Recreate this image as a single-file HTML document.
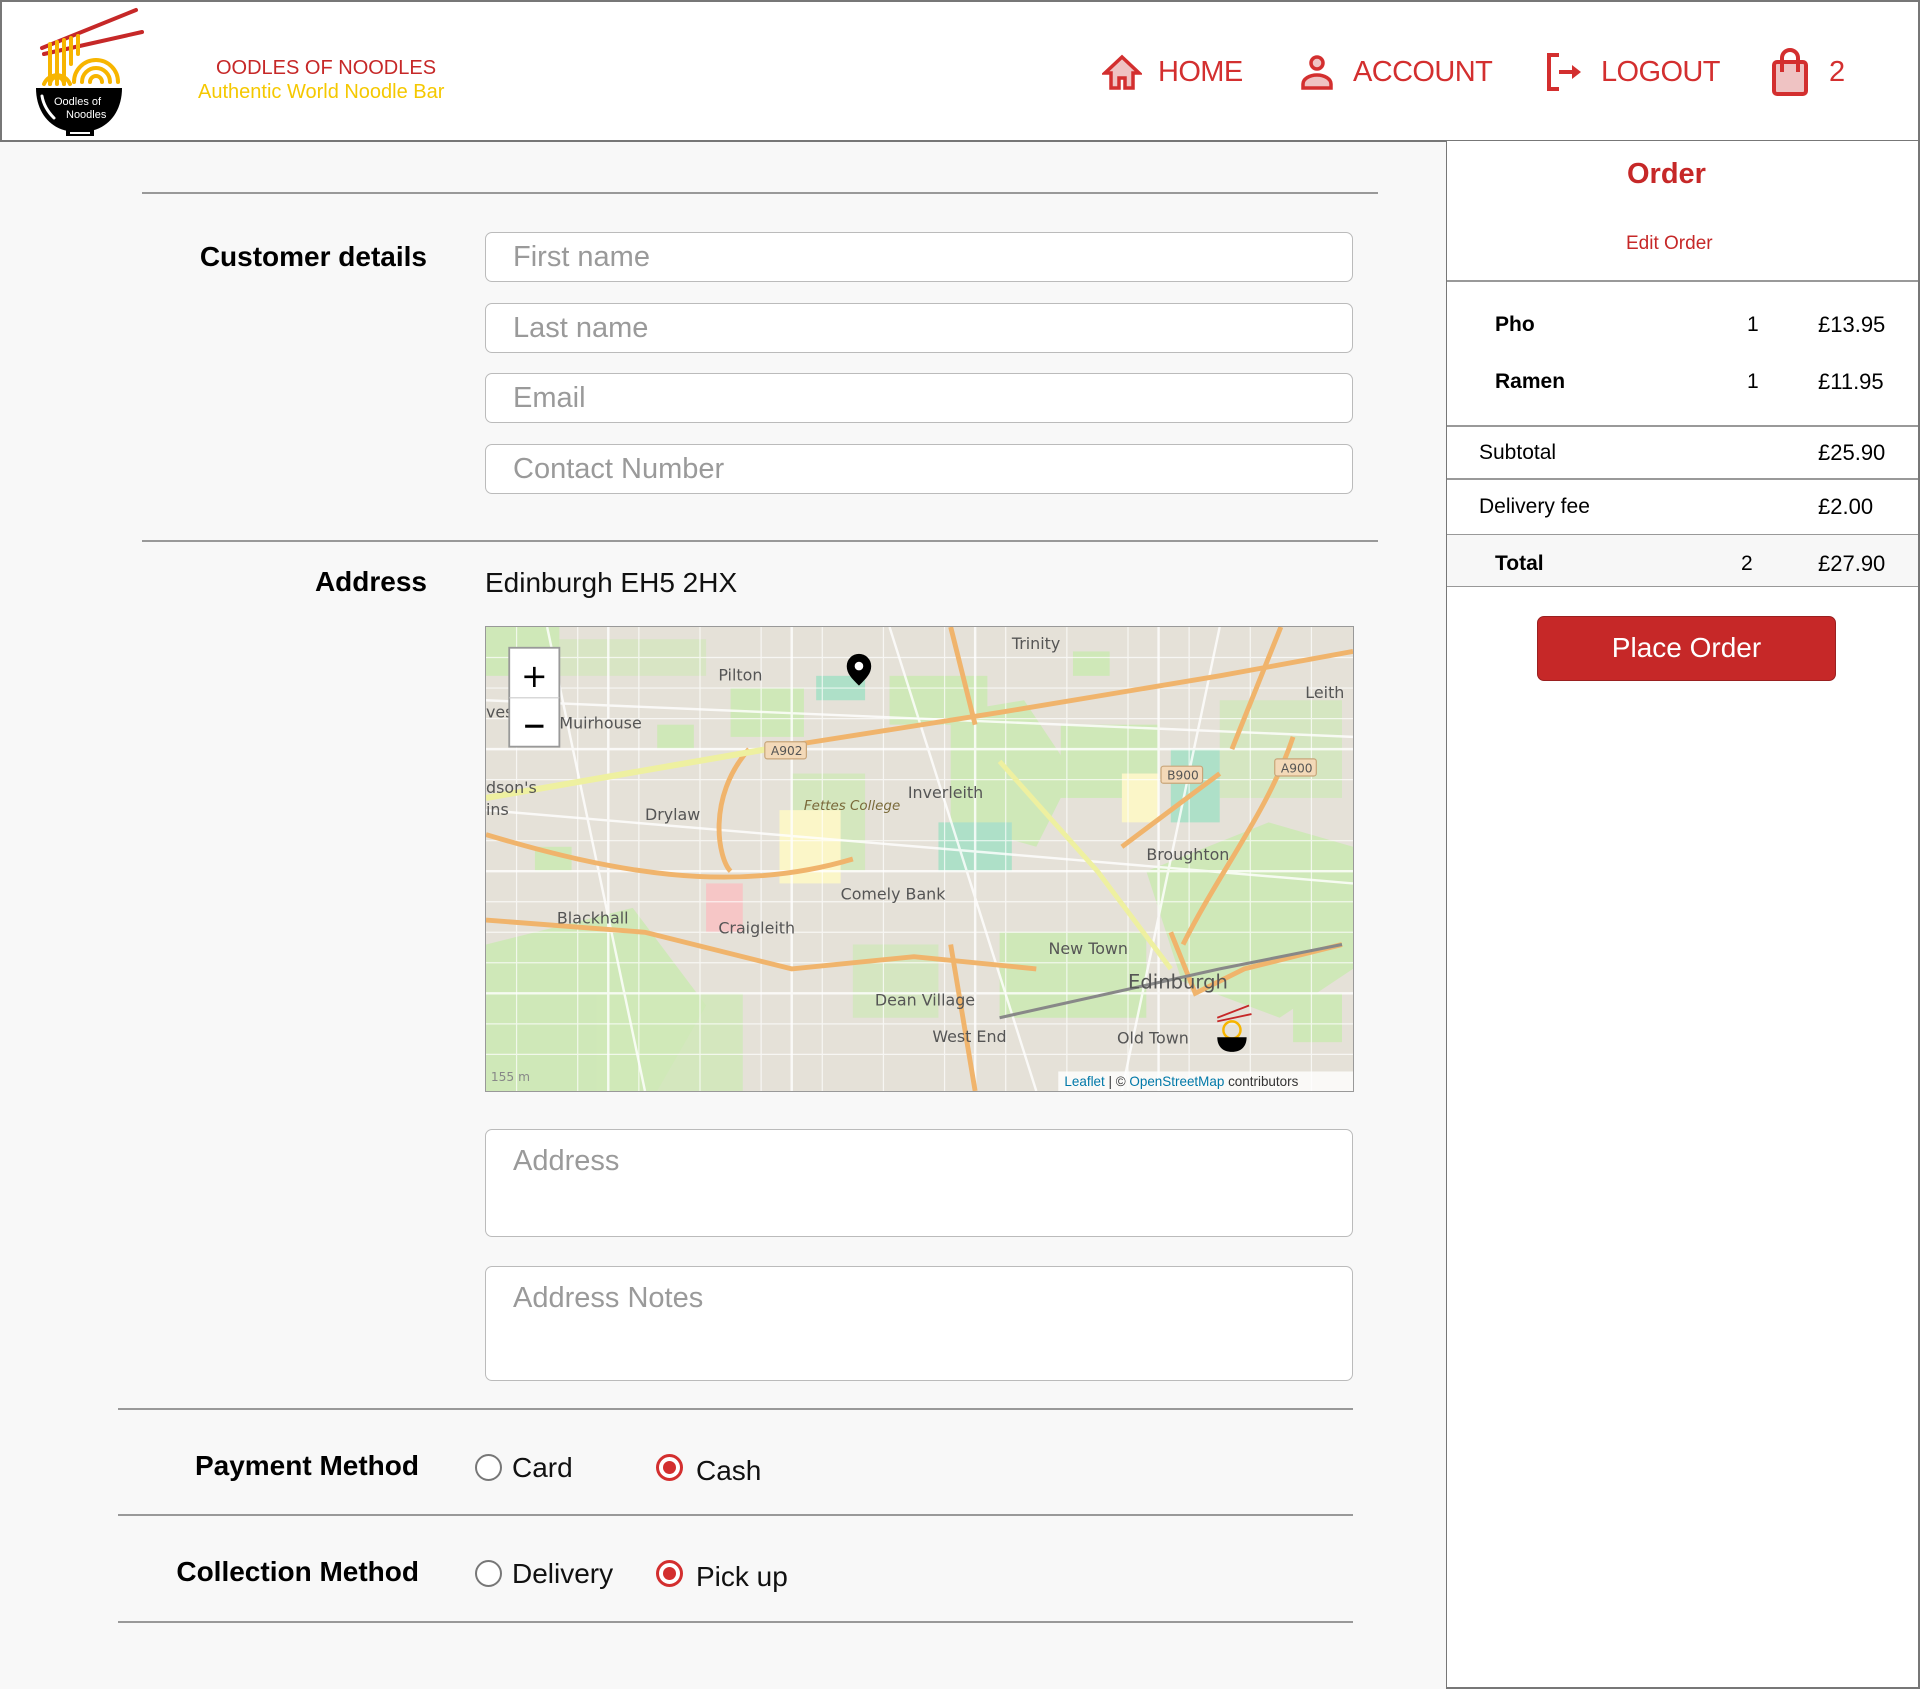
<!DOCTYPE html>
<html><head><meta charset="utf-8"><style>
*{box-sizing:border-box;margin:0;padding:0}
body{width:1920px;height:1689px;position:relative;background:#f8f8f8;font-family:"Liberation Sans",Arial,sans-serif;overflow:hidden}
.a{position:absolute;white-space:nowrap;line-height:1}
.hdr{position:absolute;left:0;top:0;width:1920px;height:142px;background:#fff;border:2px solid #777;border-bottom:2px solid #777}
.side{position:absolute;left:1446px;top:141px;width:474px;height:1548px;background:#fff;border-left:1.5px solid #777;border-right:2px solid #777;border-bottom:2px solid #777}
.hr{position:absolute;height:1.5px;background:#999}
.inp{position:absolute;left:485px;width:868px;background:#fff;border:1.5px solid #bbb;border-radius:7px}
.ph{position:absolute;left:27px;font-size:29px;color:#9a9a9a;line-height:1}
.lab{position:absolute;font-size:28px;font-weight:bold;color:#000;line-height:1;text-align:right}
.nav{color:#d32f2f;font-size:29px;letter-spacing:-0.6px}
.r{position:absolute;width:27px;height:27px;border-radius:50%;border:2px solid #777;background:#fff}
.r.on{border:3px solid #d32f2f}
.r.on:after{content:"";position:absolute;left:4px;top:4px;width:13px;height:13px;border-radius:50%;background:#d32f2f}
.opt{font-size:28px;color:#111}
.s{font-size:21px;color:#000}
.b{font-weight:bold}
</style></head><body>
<div class="hdr"></div>
<svg class="a" style="left:30px;top:4px" width="118" height="134" viewBox="0 0 118 134">
<line x1="12" y1="44" x2="106" y2="6" stroke="#c62828" stroke-width="4" stroke-linecap="round"/>
<line x1="14" y1="50" x2="112" y2="28" stroke="#c62828" stroke-width="4" stroke-linecap="round"/>
<g stroke="#f7b500" stroke-width="4" fill="none" stroke-linecap="round">
<path d="M20 40V80M27 38V80M34 36V80M41 34V60M48 32V50"/>
<path d="M44 78a22 22 0 0 1 44 0M52 78a14 14 0 0 1 28 0M60 78a6 6 0 0 1 12 0"/>
<path d="M14 80a14 14 0 0 1 26 0M20 80a7 7 0 0 1 14 0"/>
</g>
<path d="M6 84H92C92 108 78 124 60 127H38C20 124 6 108 6 84Z" fill="#000"/>
<rect x="36" y="126" width="28" height="6" fill="#000"/><rect x="40" y="128" width="20" height="2" fill="#fff"/>
<text x="24" y="101" font-size="11" fill="#fff" font-family="Liberation Sans Narrow,sans-serif">Oodles of</text>
<text x="36" y="114" font-size="11" fill="#fff" font-family="Liberation Sans Narrow,sans-serif">Noodles</text>
<path d="M12 92q2 12 12 22" stroke="#fff" stroke-width="3" fill="none" stroke-linecap="round"/>
</svg>
<div class="a" style="left:216px;top:58px;font-size:20px;color:#c62828">OODLES OF NOODLES</div>
<div class="a" style="left:198px;top:82px;font-size:20px;color:#f5c800">Authentic World Noodle Bar</div>
<svg class="a" style="left:1102px;top:54px" width="40" height="36" viewBox="0 0 40 36"><path d="M20 3L3 19h6v15h8V24h6v10h8V19h6Z" fill="#efc3c3" stroke="#d32f2f" stroke-width="3.5" stroke-linejoin="miter"/></svg>
<div class="a nav" style="left:1158px;top:58px">HOME</div>
<svg class="a" style="left:1299px;top:54px" width="36" height="36" viewBox="0 0 36 36"><circle cx="18" cy="9" r="6" fill="#efc3c3" stroke="#d32f2f" stroke-width="3.5"/><path d="M4 34v-4a14 9 0 0 1 28 0v4Z" fill="#efc3c3" stroke="#d32f2f" stroke-width="3.5"/></svg>
<div class="a nav" style="left:1353px;top:58px">ACCOUNT</div>
<svg class="a" style="left:1545px;top:52px" width="42" height="40" viewBox="0 0 42 40"><path d="M14 3H4v34h10" fill="none" stroke="#d32f2f" stroke-width="4"/><path d="M14 20h15" stroke="#d32f2f" stroke-width="4"/><path d="M27 13l9 7-9 7Z" fill="#d32f2f"/></svg>
<div class="a nav" style="left:1601px;top:58px">LOGOUT</div>
<svg class="a" style="left:1772px;top:48px" width="36" height="48" viewBox="0 0 36 48"><rect x="2" y="14" width="32" height="32" rx="3" fill="#efc3c3" stroke="#d32f2f" stroke-width="4"/><path d="M10 24V10a8 8 0 0 1 16 0v14" fill="none" stroke="#d32f2f" stroke-width="4"/></svg>
<div class="a nav" style="left:1829px;top:58px">2</div>

<div class="hr" style="left:142px;top:192px;width:1236px"></div>
<div class="lab" style="left:100px;width:327px;top:243px">Customer details</div>
<div class="inp" style="top:232px;height:50px"><div class="ph" style="top:10px">First name</div></div>
<div class="inp" style="top:303px;height:50px"><div class="ph" style="top:10px">Last name</div></div>
<div class="inp" style="top:373px;height:50px"><div class="ph" style="top:10px">Email</div></div>
<div class="inp" style="top:444px;height:50px"><div class="ph" style="top:10px">Contact Number</div></div>
<div class="hr" style="left:142px;top:540px;width:1236px"></div>
<div class="lab" style="left:100px;width:327px;top:568px">Address</div>
<div class="a" style="left:485px;top:569px;font-size:28px;color:#111">Edinburgh EH5 2HX</div>

<svg class="a" style="left:485px;top:626px;border:1.5px solid #999" width="869" height="466" viewBox="0 0 709 380" preserveAspectRatio="none">
<rect width="709" height="380" fill="#e5e1d8"/>
<g fill="#cfe8b8">
<rect x="0" y="0" width="60" height="40"/><rect x="60" y="10" width="120" height="30" opacity=".6"/>
<rect x="200" y="50" width="60" height="40"/><rect x="330" y="40" width="80" height="40"/>
<path d="M380 70l60 -10 40 60 -30 60 -70 -20Z"/><rect x="470" y="80" width="80" height="60"/>
<path d="M0 260l120 -30 60 80 -40 70H0Z"/><rect x="90" y="300" width="120" height="80" opacity=".8"/>
<path d="M540 200l100 -40 69 20v100l-60 40-80-30Z"/><rect x="600" y="60" width="100" height="80" opacity=".7"/>
<rect x="420" y="250" width="120" height="70"/><rect x="250" y="120" width="60" height="80" opacity=".8"/>
<rect x="300" y="260" width="70" height="60" opacity=".7"/>
<rect x="140" y="80" width="30" height="20"/><rect x="40" y="180" width="30" height="20"/><rect x="480" y="20" width="30" height="20"/><rect x="660" y="300" width="40" height="40"/>
</g>
<g fill="#aee0c8"><rect x="370" y="160" width="60" height="40"/><rect x="560" y="100" width="40" height="60"/><rect x="270" y="40" width="40" height="20"/></g>
<g fill="#fbf6c8"><rect x="240" y="150" width="50" height="60"/><rect x="520" y="120" width="30" height="40"/></g>
<rect x="180" y="210" width="30" height="40" fill="#f6c6c6"/>
<g stroke="#fff" stroke-width="1" fill="none" opacity=".7">
<path d="M0 25h709M0 50h709M0 75h709M0 125h709M0 175h709M0 225h709M0 250h709M0 275h709M0 325h709M0 350h709M25 0v380M75 0v380M125 0v380M175 0v380M225 0v380M275 0v380M325 0v380M375 0v380M425 0v380M475 0v380M525 0v380M575 0v380M625 0v380M675 0v380"/>
</g>
<g stroke="#fff" stroke-width="2" fill="none" opacity=".8">
<path d="M0 100h709M0 200h709M0 300h709M100 0v380M250 0v380M400 0v380M550 0v380M50 0l80 380M330 0l120 380M600 0l-80 380M0 150l709 60M0 60l709 30"/>
</g>
<g stroke="#f0b46c" stroke-width="4" fill="none">
<path d="M230 100L420 70L600 40L709 20"/><path d="M0 170C100 200 200 220 300 190"/><path d="M215 100C180 140 190 190 200 200"/>
<path d="M380 0l20 80"/><path d="M660 90C640 150 600 200 570 260"/><path d="M600 120l-80 60"/>
<path d="M0 240l130 10 120 30 100 -10 100 10"/><path d="M380 260l20 120"/><path d="M560 250l20 50 40 -20 80 -20"/>
<path d="M650 0l-40 100"/>
</g>
<path d="M0 140l230 -40" stroke="#eef0a0" stroke-width="5" fill="none"/>
<path d="M420 110l80 90 60 80" stroke="#eef0a0" stroke-width="4" fill="none"/>
<path d="M420 320l180 -40 100 -20" stroke="#888" stroke-width="2.5" fill="none"/>
<g font-family="DejaVu Sans,sans-serif" font-size="13" fill="#555">
<text x="190" y="44">Pilton</text><text x="430" y="18">Trinity</text><text x="60" y="83">Muirhouse</text>
<text x="0" y="74">ves</text><text x="0" y="136">dson's</text><text x="0" y="154">ins</text>
<text x="130" y="158">Drylaw</text><text x="345" y="140">Inverleith</text><text x="540" y="191">Broughton</text>
<text x="290" y="223">Comely Bank</text><text x="58" y="243">Blackhall</text><text x="190" y="251">Craigleith</text>
<text x="460" y="268">New Town</text><text x="525" y="296" font-size="16">Edinburgh</text><text x="318" y="310">Dean Village</text>
<text x="365" y="340">West End</text><text x="516" y="341">Old Town</text><text x="670" y="58">Leith</text>
<text x="260" y="150" font-style="italic" font-size="11" fill="#7a6a3a">Fettes College</text>
</g>
<rect x="228" y="94" width="34" height="14" rx="2" fill="#f3d9b8" stroke="#c9a67a"/><text x="233" y="105" font-size="10" fill="#555" font-family="DejaVu Sans,sans-serif">A902</text>
<rect x="552" y="114" width="34" height="14" rx="2" fill="#f3d9b8" stroke="#c9a67a"/><text x="557" y="125" font-size="10" fill="#555" font-family="DejaVu Sans,sans-serif">B900</text>
<rect x="645" y="108" width="34" height="14" rx="2" fill="#f3d9b8" stroke="#c9a67a"/><text x="650" y="119" font-size="10" fill="#555" font-family="DejaVu Sans,sans-serif">A900</text>
<path d="M305 48c-6-6-10-10-10-16a10 10 0 0 1 20 0c0 6-4 10-10 16Z" fill="#000"/><circle cx="305" cy="32" r="3.5" fill="#fff"/>
<g transform="translate(598,312)"><line x1="0" y1="8" x2="26" y2="-2" stroke="#c62828" stroke-width="1.5"/><line x1="0" y1="11" x2="28" y2="5" stroke="#c62828" stroke-width="1.5"/><circle cx="12" cy="18" r="7" fill="none" stroke="#f7b500" stroke-width="2"/><path d="M0 24h24c0 8-5 12-12 12S0 32 0 24Z" fill="#000"/></g>
<rect x="19" y="17" width="41" height="81" fill="#fff" stroke="#999" stroke-width="1.5"/><line x1="19" y1="58" x2="60" y2="58" stroke="#ccc"/>
<text x="39.5" y="49" font-size="26" text-anchor="middle" font-family="DejaVu Sans,sans-serif" fill="#000">+</text>
<rect x="32" y="80" width="15" height="2.5" fill="#000"/>
<rect x="468" y="364" width="241" height="16" fill="#fff" opacity=".8"/>
<text x="473" y="376" font-size="11" font-family="Liberation Sans,sans-serif" fill="#333"><tspan fill="#0078a8">Leaflet</tspan> | © <tspan fill="#0078a8">OpenStreetMap</tspan> contributors</text>
<text x="4" y="372" font-size="10" fill="#888" font-family="DejaVu Sans,sans-serif">155 m</text>
</svg>

<div class="inp" style="top:1129px;height:108px"><div class="ph" style="top:17px">Address</div></div>
<div class="inp" style="top:1266px;height:115px"><div class="ph" style="top:17px">Address Notes</div></div>
<div class="hr" style="left:118px;top:1408px;width:1235px"></div>
<div class="lab" style="left:100px;width:319px;top:1452px">Payment Method</div>
<div class="r" style="left:475px;top:1454px"></div><div class="a opt" style="left:512px;top:1454px">Card</div>
<div class="r on" style="left:656px;top:1454px"></div><div class="a opt" style="left:696px;top:1457px">Cash</div>
<div class="hr" style="left:118px;top:1514px;width:1235px"></div>
<div class="lab" style="left:100px;width:319px;top:1558px">Collection Method</div>
<div class="r" style="left:475px;top:1560px"></div><div class="a opt" style="left:512px;top:1560px">Delivery</div>
<div class="r on" style="left:656px;top:1560px"></div><div class="a opt" style="left:696px;top:1563px">Pick up</div>
<div class="hr" style="left:118px;top:1621px;width:1235px"></div>

<div class="side"></div>
<div class="a b" style="left:1627px;top:160px;font-size:29px;color:#c62828">Order</div>
<div class="a" style="left:1626px;top:234px;font-size:19px;color:#c62828">Edit Order</div>
<div class="hr" style="left:1447px;top:280px;width:471px"></div>
<div class="a s b" style="left:1495px;top:314px">Pho</div><div class="a s" style="left:1747px;top:314px">1</div><div class="a s" style="left:1818px;top:314px;font-size:22px">£13.95</div>
<div class="a s b" style="left:1495px;top:371px">Ramen</div><div class="a s" style="left:1747px;top:371px">1</div><div class="a s" style="left:1818px;top:371px;font-size:22px">£11.95</div>
<div class="hr" style="left:1447px;top:425px;width:471px"></div>
<div class="a s" style="left:1479px;top:442px">Subtotal</div><div class="a s" style="left:1818px;top:442px;font-size:22px">£25.90</div>
<div class="hr" style="left:1447px;top:478px;width:471px"></div>
<div class="a s" style="left:1479px;top:496px">Delivery fee</div><div class="a s" style="left:1818px;top:496px;font-size:22px">£2.00</div>
<div style="position:absolute;left:1447px;top:534px;width:471px;height:53px;background:#f7f7f7;border-top:1.5px solid #999;border-bottom:1.5px solid #999"></div>
<div class="a s b" style="left:1495px;top:553px">Total</div><div class="a s" style="left:1741px;top:553px">2</div><div class="a s" style="left:1818px;top:553px;font-size:22px">£27.90</div>
<div style="position:absolute;left:1537px;top:616px;width:299px;height:65px;background:#c62828;border-radius:7px;border:1.5px solid #9a2020;color:#fff;font-size:28px;text-align:center;line-height:62px">Place Order</div>
</body></html>
